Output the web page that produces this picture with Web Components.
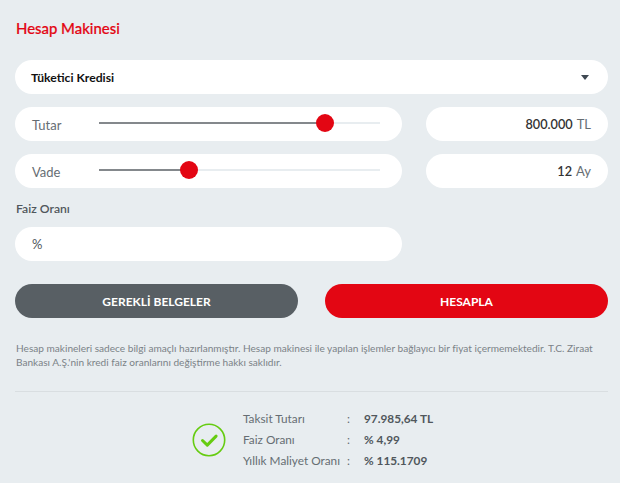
<!DOCTYPE html>
<html lang="tr">
<head>
<meta charset="utf-8">
<title>Hesap Makinesi</title>
<style>
  html, body { margin: 0; height: 483px; overflow: hidden; }
  body { background: #e8edf0; font-family: Lato, "Open Sans", sans-serif; color: #111; }
</style>
</head>
<body>
<calc-app>
  <h-title slot="title">Hesap Makinesi</h-title>
  <pill-select slot="select">Tüketici Kredisi</pill-select>
  <range-pill slot="amount" label="Tutar" value="80.3"></range-pill>
  <value-pill slot="amount-value" unit="TL">800.000</value-pill>
  <range-pill slot="term" label="Vade" value="32"></range-pill>
  <value-pill slot="term-value" unit="Ay">12</value-pill>
</calc-app>

<script>
class HTitle extends HTMLElement {
  constructor() {
    super()
    this.attachShadow({ mode: 'open' })
    this.shadowRoot.innerHTML = `
      <style>
        :host { display: block; padding-left: 1px; font-size: 14.9px; line-height: 20px; font-weight: 500; color: #e30613; -webkit-text-stroke: 0.2px #e30613; }
      </style>
      <slot></slot>
    `
  }
}

class PillSelect extends HTMLElement {
  constructor() {
    super()
    this.attachShadow({ mode: 'open' })
    this.shadowRoot.innerHTML = `
      <style>
        :host {
          display: flex; align-items: center; justify-content: space-between;
          height: 34px; padding: 0 19px 0 16px; background: #fff; border-radius: 17px;
          font-size: 12.2px; font-weight: 700; color: #111;
        }
        i { width: 0; height: 0; border: 4.5px solid transparent; border-top: 5px solid #3f4852; border-bottom: 0; }
      </style>
      <span><slot></slot></span><i></i>
    `
  }
}

class RangePill extends HTMLElement {
  constructor() {
    super()
    this.attachShadow({ mode: 'open' })
  }

  connectedCallback() {
    const value = this.getAttribute('value')
    this.shadowRoot.innerHTML = `
      <style>
        :host {
          display: flex; align-items: center; height: 34px;
          padding: 0 22px 0 17px; background: #fff; border-radius: 17px;
          font-size: 13px; color: #666d73;
        }
        span { width: 67px; padding-top: 2px; }
        .track { position: relative; flex: 1; height: 2px; margin-top: -3px; background: #e8edf0; }
        .fill { height: 100%; width: ${value}%; background: #84888c; }
        .thumb {
          position: absolute; left: ${value}%; top: 50%; width: 18px; height: 18px;
          margin: -9px 0 0 -9px; border-radius: 50%; background: #e30613;
        }
      </style>
      <span>${this.getAttribute('label')}</span>
      <div class="track"><div class="fill"></div><div class="thumb"></div></div>
    `
  }
}

class ValuePill extends HTMLElement {
  constructor() {
    super()
    this.attachShadow({ mode: 'open' })
  }

  connectedCallback() {
    this.shadowRoot.innerHTML = `
      <style>
        :host {
          display: flex; align-items: center; justify-content: flex-end; gap: 4px;
          height: 34px; padding: 0 17px; background: #fff; border-radius: 17px;
          font-size: 13px; color: #666d73;
        }
        b { font-size: 12.7px; font-weight: 600; color: #333; }
      </style>
      <b><slot></slot></b><span>${this.getAttribute('unit')}</span>
    `
  }
}

class PillButton extends HTMLElement {
  constructor() {
    super()
    this.attachShadow({ mode: 'open' })
    this.shadowRoot.innerHTML = `
      <style>
        :host {
          display: flex; align-items: center; justify-content: center;
          height: 34px; border-radius: 17px; background: #585f64; color: #fff;
          font-size: 12px; font-weight: 700;
        }
        :host([primary]) { background: #e30613; }
      </style>
      <slot></slot>
    `
  }
}

class ResultRow extends HTMLElement {
  constructor() {
    super()
    this.attachShadow({ mode: 'open' })
  }

  connectedCallback() {
    this.shadowRoot.innerHTML = `
      <style>
        :host {
          display: grid; grid-template-columns: 104px 17px auto; align-items: center;
          height: 21px; font-size: 11.8px; color: #666d73; white-space: nowrap;
        }
        b { color: #50575c; font-weight: 700; }
      </style>
      <span>${this.getAttribute('label')}</span><span>:</span><b><slot></slot></b>
    `
  }
}

class CalcApp extends HTMLElement {
  constructor() {
    super()
    this.attachShadow({ mode: 'open' })
    this.shadowRoot.innerHTML = `
      <style>
        :host { display: block; padding: 18px 12px 0 15px; }
        .select { display: block; margin-top: 22px; }
        .grid {
          display: grid; grid-template-columns: 387px 182px; column-gap: 24px; row-gap: 13px;
          margin-top: 13px;
        }
        .label { margin-top: 13px; padding-left: 1px; font-size: 12.2px; line-height: 15px; font-weight: 600; color: #50575c; }
        .rate {
          display: flex; align-items: center; width: 370px; height: 34px; margin-top: 11px;
          padding-left: 17px; background: #fff; border-radius: 17px; font-size: 13px; color: #50575c;
        }
        .buttons { display: grid; grid-template-columns: 283px 283px; column-gap: 27px; margin-top: 23px; }
        .note { margin: 23px 0 0; padding-left: 1px; font-size: 10.1px; line-height: 14px; color: #7b8287; }
        hr { margin: 22px 0 0; border: 0; border-top: 1px solid #d9dee1; }
        .result { display: flex; align-items: center; margin: 16px 0 0 177px; gap: 17px; }
        svg { display: block; margin-top: 1px; }
      </style>
      <slot name="title"></slot>
      <div class="select"><slot name="select"></slot></div>
      <div class="grid">
        <slot name="amount"></slot><slot name="amount-value"></slot>
        <slot name="term"></slot><slot name="term-value"></slot>
      </div>
      <div class="label">Faiz Oranı</div>
      <div class="rate">%</div>
      <div class="buttons">
        <pill-button>GEREKLİ BELGELER</pill-button>
        <pill-button primary>HESAPLA</pill-button>
      </div>
      <p class="note">Hesap makineleri sadece bilgi amaçlı hazırlanmıştır. Hesap makinesi ile yapılan işlemler bağlayıcı bir fiyat içermemektedir. T.C. Ziraat Bankası A.Ş.'nin kredi faiz oranlarını değiştirme hakkı saklıdır.</p>
      <hr>
      <div class="result">
        <svg width="34" height="34" viewBox="0 0 34 34" fill="none" stroke="#66cc11">
          <circle cx="17" cy="17" r="15.7" stroke-width="1.6"/>
          <path d="M10.5 17.5l4.8 4.6 8.8-9" stroke-width="3" stroke-linecap="round" stroke-linejoin="round"/>
        </svg>
        <div>
          <result-row label="Taksit Tutarı">97.985,64 TL</result-row>
          <result-row label="Faiz Oranı">% 4,99</result-row>
          <result-row label="Yıllık Maliyet Oranı">% 115.1709</result-row>
        </div>
      </div>
    `
  }
}

customElements.define('h-title', HTitle)
customElements.define('pill-select', PillSelect)
customElements.define('range-pill', RangePill)
customElements.define('value-pill', ValuePill)
customElements.define('pill-button', PillButton)
customElements.define('result-row', ResultRow)
customElements.define('calc-app', CalcApp)
</script>
</body>
</html>
